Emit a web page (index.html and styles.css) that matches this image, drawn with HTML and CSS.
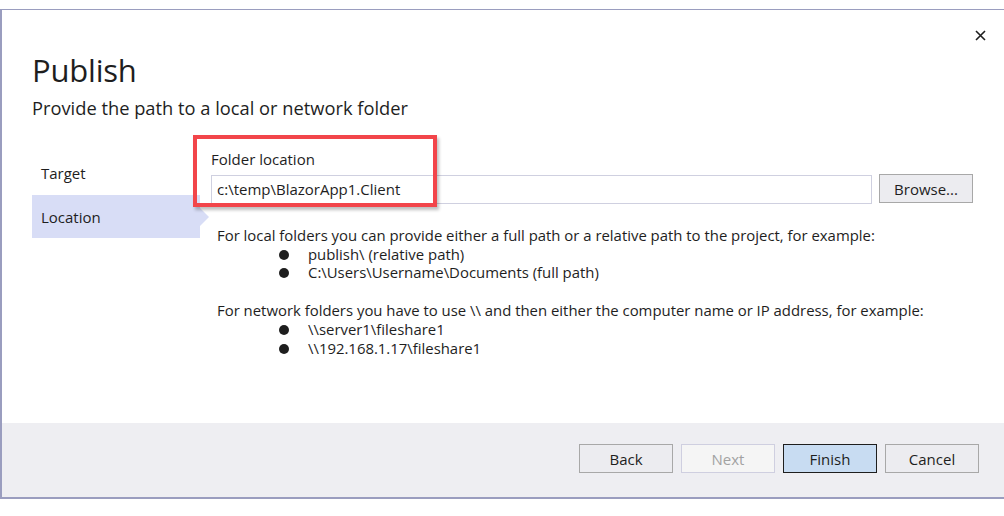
FILE: index.html
```html
<!DOCTYPE html>
<html>
<head>
<meta charset="utf-8">
<link rel="stylesheet" href="styles.css">
</head>
<body>
<div class="window">
  <div class="main">
    <div class="head">
      <div class="titles">
        <h1 class="title">Publish</h1>
        <p class="subtitle">Provide the path to a local or network folder</p>
      </div>
      <button class="close" aria-label="Close">
        <svg width="11" height="11" viewBox="0 0 11 11"><path d="M1 1 L10 10 M10 1 L1 10" stroke="#1e1e1e" stroke-width="1.6" fill="none"/></svg>
      </button>
    </div>
    <div class="content">
      <nav class="nav">
        <div class="nav-item">Target</div>
        <div class="nav-item active">Location</div>
      </nav>
      <div class="panel">
        <div class="field">
          <label class="label">Folder location</label>
          <div class="input-row">
            <div class="input">c:\temp\BlazorApp1.Client</div>
            <button class="btn browse">Browse...</button>
          </div>
        </div>
        <div class="help">
          <p>For local folders you can provide either a full path or a relative path to the project, for example:</p>
          <ul>
            <li>publish\ (relative path)</li>
            <li>C:\Users\Username\Documents (full path)</li>
          </ul>
          <p class="gap">For network folders you have to use \\ and then either the computer name or IP address, for example:</p>
          <ul>
            <li>\\server1\fileshare1</li>
            <li>\\192.168.1.17\fileshare1</li>
          </ul>
        </div>
        <div class="highlight"></div>
      </div>
    </div>
  </div>
  <div class="footer">
    <button class="btn">Back</button>
    <button class="btn disabled">Next</button>
    <button class="btn primary">Finish</button>
    <button class="btn">Cancel</button>
  </div>
</div>
</body>
</html>
```
FILE: styles.css
```css
* { box-sizing: border-box; }
html, body { margin: 0; padding: 0; background: #fff; }
body {
  font-family: "Open Sans", "Noto Sans", sans-serif;
  color: #1e1e1e;
  width: 1004px;
  height: 516px;
  overflow: hidden;
}
.window {
  margin-top: 9px;
  height: 490px;
  width: 1004px;
  border-top: 1px solid #9a9dbf;
  border-left: 2px solid #9a9dbf;
  border-bottom: 2px solid #9a9dbf;
  display: flex;
  flex-direction: column;
}
.main { flex: 1; display: flex; flex-direction: column; }
.head {
  display: flex;
  justify-content: space-between;
  padding: 0 0 0 30px;
}
.title {
  margin: 38px 0 0 0;
  font-size: 31px;
  font-weight: 400;
  line-height: 44px;
  letter-spacing: -0.2px;
}
.subtitle {
  margin: 4px 0 0 0;
  font-size: 18.3px;
  line-height: 24px;
}
.close {
  border: 0;
  background: none;
  padding: 0;
  width: 11px;
  height: 11px;
  margin: 20px 18px 0 0;
  display: flex;
}
.content {
  display: grid;
  grid-template-columns: 209px 1fr;
  margin-top: 24px;
}
.nav { display: flex; flex-direction: column; gap: 1px; padding-left: 30px; padding-top: 7px; }
.nav-item {
  width: 168px;
  height: 43px;
  display: flex;
  align-items: center;
  padding-left: 9px;
  font-size: 15px;
  position: relative;
}
.nav-item.active { background: #d8ddf6; }
.nav-item.active::after {
  content: "";
  position: absolute;
  right: -9px;
  top: 13px;
  border-left: 9px solid #d8ddf6;
  border-top: 9px solid transparent;
  border-bottom: 9px solid transparent;
}
.panel { position: relative; padding-right: 31px; }
.label { display: block; font-size: 15px; line-height: 20px; margin-top: 5px; }
.input-row { display: flex; gap: 7px; margin-top: 6px; align-items: flex-start; }
.input {
  flex: 1;
  height: 29px;
  border: 1px solid #cfd0e0;
  padding: 0 5px;
  font-size: 15px;
  line-height: 27px;
}
.btn {
  font-family: inherit;
  font-size: 15px;
  color: #1e1e1e;
  background: #ececf0;
  border: 1px solid #a8a8a8;
  height: 29px;
  width: 94px;
  padding: 0;
}
.browse { margin-top: -1px; }
.help { padding-left: 6px; margin-top: 22px; font-size: 14.9px; line-height: 18.7px; }
.help p { margin: 0; }
.help p.gap { margin-top: 19px; }
.help ul { margin: 0; padding-left: 91px; list-style: none; }
.help li { position: relative; }
.help li::before {
  content: "";
  position: absolute;
  left: -29px;
  top: 5px;
  width: 10px;
  height: 10px;
  border-radius: 50%;
  background: #1e1e1e;
}
.highlight {
  position: absolute;
  left: -18px;
  top: -9px;
  width: 244px;
  height: 72px;
  border: 4px solid #f2454a;
  box-shadow: 2px 3px 3px rgba(0,0,0,0.25);
  pointer-events: none;
}
.footer {
  height: 74px;
  background: #eeeef2;
  display: flex;
  justify-content: flex-start;
  align-items: flex-start;
  gap: 8px;
  padding-left: 577px;
  padding-top: 21px;
}
.btn.disabled { background: #f5f5f5; border-color: #cfcfe0; color: #a2a2a2; }
.btn.primary { background: #c8dcf2; border-color: #1e1e1e; }
```
